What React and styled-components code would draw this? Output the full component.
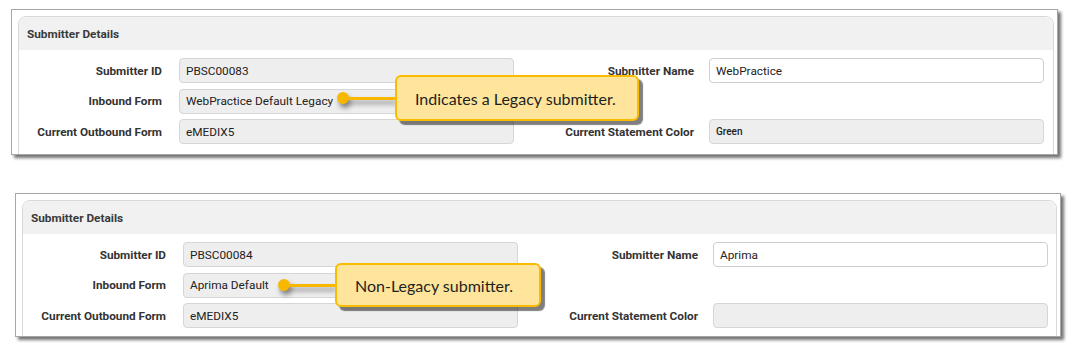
import styled, { createGlobalStyle } from "styled-components";

/* ================= styles ================= */

const GlobalStyle = createGlobalStyle`
  html, body {
    margin: 0;
    padding: 0;
    background: #fff;
  }
  body {
    font-family: Roboto, "Liberation Sans", Arial, sans-serif;
  }
`;

const Page = styled.div`
  display: flex;
  flex-direction: column;
  width: 1073px;
  height: 347px;
  overflow: hidden;
`;

const Frame = styled.div`
  position: relative;
  box-sizing: border-box;
  margin-left: ${(p) => p.$left}px;
  margin-top: ${(p) => p.$top}px;
  width: ${(p) => p.$width}px;
  height: ${(p) => p.$height}px;
  padding: 6px 3px 0 6px;
  background: #fff;
  border: 1px solid #a6a6a6;
  box-shadow: 3px 3px 3px rgba(0, 0, 0, 0.55);
`;

const Clip = styled.div`
  height: 100%;
  overflow: hidden;
`;

const Panel = styled.div`
  box-sizing: border-box;
  height: calc(100% + 10px);
  border: 1px solid #d9d9d9;
  border-radius: 8px 8px 0 0;
  background: #fff;
`;

const PanelHead = styled.div`
  height: 33px;
  display: flex;
  align-items: center;
  padding-left: 8px;
  background: #f1f1f1;
  border-radius: 8px 8px 0 0;
  font-size: 11.8px;
  font-weight: 700;
  color: #3a3a3a;
`;

const Body = styled.div`
  display: flex;
  flex-direction: column;
  gap: 5.5px;
  padding-top: 8px;
`;

const Row = styled.div`
  display: flex;
  align-items: center;
  height: 25px;
`;

const Label = styled.div`
  flex: none;
  width: ${(p) => p.$w}px;
  text-align: right;
  font-size: 11.75px;
  font-weight: 700;
  color: #333;
  white-space: nowrap;
`;

const Field = styled.div`
  flex: none;
  box-sizing: border-box;
  width: 335px;
  height: 25px;
  margin-left: ${(p) => p.$gap}px;
  display: flex;
  align-items: center;
  padding: 0 6px;
  border-radius: 4px;
  border: 1px solid ${(p) => (p.$editable ? "#cfcfcf" : "#d6d6d6")};
  background: ${(p) => (p.$editable ? "#fff" : "#eeeeee")};
  font-size: ${(p) => (p.$small ? "10px" : "11.8px")};
  font-weight: ${(p) => (p.$small ? 500 : 400)};
  color: #222;
  white-space: nowrap;
`;

/* callout overlay */

const Callout = styled.div`
  position: absolute;
  left: ${(p) => p.$x}px;
  top: ${(p) => p.$y}px;
  display: flex;
  align-items: center;
  z-index: 2;
`;

const Dot = styled.div`
  width: 12px;
  height: 12px;
  border-radius: 50%;
  background: #f9b800;
  box-shadow: 2px 4px 5px rgba(0, 0, 0, 0.45);
  flex: none;
`;

const Line = styled.div`
  width: ${(p) => p.$len}px;
  height: 3px;
  margin-left: -2px;
  background: #f9b800;
  box-shadow: 2px 4px 5px rgba(0, 0, 0, 0.4);
  flex: none;
`;

const Bubble = styled.div`
  box-sizing: border-box;
  width: ${(p) => p.$w}px;
  height: ${(p) => p.$h}px;
  display: flex;
  align-items: center;
  padding-left: 18px;
  background: #fee59b;
  border: 2.5px solid #fbbb00;
  border-radius: 6px;
  box-shadow: 4px 4px 1px rgba(0, 0, 0, 0.5);
  font-family: Lato, "Open Sans", "Liberation Sans", sans-serif;
  font-size: 16px;
  color: #1f1f1f;
  white-space: nowrap;
  flex: none;
`;

/* ================= data ================= */

const shots = [
  {
    frame: { left: 11, top: 9, width: 1047, height: 146 },
    id: "PBSC00083",
    name: "WebPractice",
    inbound: "WebPractice Default Legacy",
    outbound: "eMEDIX5",
    color: "Green",
    callout: { x: 325, y: 65, len: 48, w: 244, h: 46, text: "Indicates a Legacy submitter." },
  },
  {
    frame: { left: 15, top: 38, width: 1046, height: 144 },
    id: "PBSC00084",
    name: "Aprima",
    inbound: "Aprima Default",
    outbound: "eMEDIX5",
    color: "",
    callout: { x: 262, y: 69, len: 47, w: 206, h: 44, text: "Non-Legacy submitter." },
  },
];

const Shot = ({ s }) => (
  <Frame $left={s.frame.left} $top={s.frame.top} $width={s.frame.width} $height={s.frame.height}>
    <Clip>
      <Panel>
        <PanelHead>Submitter Details</PanelHead>
        <Body>
          <Row>
            <Label $w={143}>Submitter ID</Label>
            <Field $gap={17}>{s.id}</Field>
            <Label $w={180}>Submitter Name</Label>
            <Field $gap={15} $editable>{s.name}</Field>
          </Row>
          <Row>
            <Label $w={143}>Inbound Form</Label>
            <Field $gap={17}>{s.inbound}</Field>
          </Row>
          <Row>
            <Label $w={143}>Current Outbound Form</Label>
            <Field $gap={17}>{s.outbound}</Field>
            <Label $w={180}>Current Statement Color</Label>
            <Field $gap={15} $small>{s.color}</Field>
          </Row>
        </Body>
      </Panel>
    </Clip>
    <Callout $x={s.callout.x} $y={s.callout.y}>
      <Dot />
      <Line $len={s.callout.len} />
      <Bubble $w={s.callout.w} $h={s.callout.h}>{s.callout.text}</Bubble>
    </Callout>
  </Frame>
);

const App = () => (
  <Page>
    <GlobalStyle />
    {shots.map((s) => (
      <Shot key={s.id} s={s} />
    ))}
  </Page>
);

export default App;
